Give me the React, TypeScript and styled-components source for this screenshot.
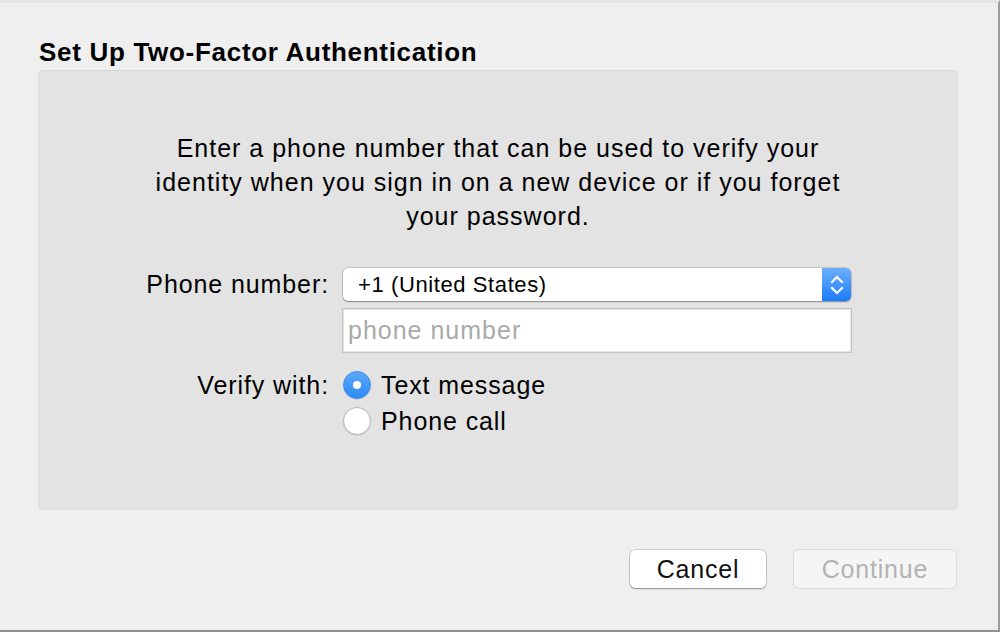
import React from 'react';
import styled, { createGlobalStyle } from 'styled-components';

const GlobalStyle = createGlobalStyle`
  html, body {
    margin: 0;
    padding: 0;
    background: #efefef;
  }
  body {
    font-family: "Liberation Sans", Arial, sans-serif;
    color: #000;
  }
`;

const Window = styled.div`
  box-sizing: border-box;
  width: 1000px;
  height: 632px;
  display: flex;
  flex-direction: column;
  padding: 0 40px 0 38px;
  background: #efefef;
  border-top: 3px solid #e5e5e5;
  border-right: 2px solid #9c9c9c;
  border-bottom: 2px solid #8f8f8f;
`;

const Title = styled.h1`
  margin: 35px 0 4px 1px;
  font-size: 26px;
  line-height: 28px;
  font-weight: 700;
  letter-spacing: 0.7px;
`;

const Panel = styled.div`
  box-sizing: border-box;
  height: 440px;
  display: flex;
  flex-direction: column;
  align-items: center;
  padding-top: 61px;
  background: #e3e3e3;
  border-radius: 6px;
  box-shadow: inset 0 1px 0 #d7d7d7, inset 0 0 0 1px #dcdcdc;
`;

const Intro = styled.p`
  margin: 0;
  text-align: center;
  font-size: 25px;
  line-height: 34px;
  letter-spacing: 1px;
`;

const Form = styled.div`
  align-self: flex-start;
  display: grid;
  grid-template-columns: 291px 510px;
  column-gap: 13px;
  margin-top: 35px;
`;

const Label = styled.div<{ rowHeight: number }>`
  text-align: right;
  font-size: 25px;
  letter-spacing: 0.9px;
  line-height: ${(props): string => `${props.rowHeight}px`};
`;

const Stack = styled.div<{ gap: number }>`
  display: flex;
  flex-direction: column;
  gap: ${(props): string => `${props.gap}px`};
`;

const Select = styled.div`
  height: 33px;
  display: flex;
  align-items: center;
  background: #fff;
  border-radius: 5px;
  box-shadow: 0 0 0 0.5px rgba(0, 0, 0, 0.25), 0 1px 1.5px rgba(0, 0, 0, 0.3);
  margin: 0 1px;
`;

const SelectValue = styled.span`
  flex: 1;
  padding-left: 15px;
  font-size: 22px;
  letter-spacing: 0.6px;
`;

const Stepper = styled.div`
  width: 29px;
  align-self: stretch;
  display: flex;
  align-items: center;
  justify-content: center;
  border-radius: 0 5px 5px 0;
  background: linear-gradient(#6db0fd, #1a7cfa);
`;

const TextInput = styled.div`
  box-sizing: border-box;
  height: 45px;
  display: flex;
  align-items: center;
  padding-left: 5px;
  background: #fff;
  border: 1px solid #c3c3c3;
  box-shadow: inset 0 0 0 1px #e6e6e6;
  color: #a9a9a9;
  font-size: 25px;
  letter-spacing: 1px;
`;

const RadioGroup = styled.div`
  display: flex;
  flex-direction: column;
  margin-top: 14px;
`;

const RadioRow = styled.div`
  height: 36px;
  display: flex;
  align-items: center;
  gap: 10px;
  font-size: 25px;
  letter-spacing: 0.9px;
  padding-left: 1px;
`;

const Radio = styled.span<{ checked?: boolean }>`
  box-sizing: border-box;
  width: 28px;
  height: 28px;
  border-radius: 50%;
  display: flex;
  align-items: center;
  justify-content: center;
  background: ${(props): string =>
    props.checked ? 'linear-gradient(#5aa9fa, #2f89f6)' : '#fff'};
  border: ${(props): string => (props.checked ? '1px solid #3a8ee8' : '1px solid #b8b8b8')};
  box-shadow: 0 0.5px 1px rgba(0, 0, 0, 0.15);

  &::after {
    content: '';
    display: ${(props): string => (props.checked ? 'block' : 'none')};
    width: 8px;
    height: 8px;
    border-radius: 50%;
    background: #fff;
  }
`;

const Footer = styled.div`
  display: flex;
  justify-content: flex-end;
  gap: 28px;
  margin-top: 40px;
  padding-right: 2px;
`;

const Button = styled.button<{ disabled?: boolean; width: number }>`
  box-sizing: border-box;
  width: ${(props): string => `${props.width}px`};
  height: 38px;
  font-family: inherit;
  font-size: 25px;
  letter-spacing: 0.8px;
  border-radius: 5px;
  border: none;
  padding: 0;
  background: ${(props): string => (props.disabled ? '#f5f5f5' : '#fff')};
  color: ${(props): string => (props.disabled ? '#b3b3b3' : '#111')};
  box-shadow: ${(props): string =>
    props.disabled
      ? '0 0 0 1px #dcdcdc'
      : '0 0 0 0.5px rgba(0,0,0,0.25), 0 1px 1.5px rgba(0,0,0,0.3)'};
`;

const Chevrons = (): JSX.Element => (
  <svg width="14" height="22" viewBox="0 0 14 22" fill="none" stroke="#fff" strokeWidth="2.2" strokeLinecap="square">
    <path d="M2 8 L7 3 L12 8" />
    <path d="M2 14 L7 19 L12 14" />
  </svg>
);

const App = (): JSX.Element => (
  <>
    <GlobalStyle />
    <Window>
      <Title>Set Up Two-Factor Authentication</Title>
      <Panel>
        <Intro>
          Enter a phone number that can be used to verify your
          <br />
          identity when you sign in on a new device or if you forget
          <br />
          your password.
        </Intro>
        <Form>
          <Label rowHeight={33}>Phone number:</Label>
          <Stack gap={7}>
            <Select>
              <SelectValue>+1 (United States)</SelectValue>
              <Stepper>
                <Chevrons />
              </Stepper>
            </Select>
            <TextInput>phone number</TextInput>
          </Stack>
          <RadioGroup>
            <Label rowHeight={36}>Verify with:</Label>
          </RadioGroup>
          <RadioGroup>
            <RadioRow>
              <Radio checked />
              Text message
            </RadioRow>
            <RadioRow>
              <Radio />
              Phone call
            </RadioRow>
          </RadioGroup>
        </Form>
      </Panel>
      <Footer>
        <Button width={136}>Cancel</Button>
        <Button width={162} disabled>
          Continue
        </Button>
      </Footer>
    </Window>
  </>
);

export default App;
